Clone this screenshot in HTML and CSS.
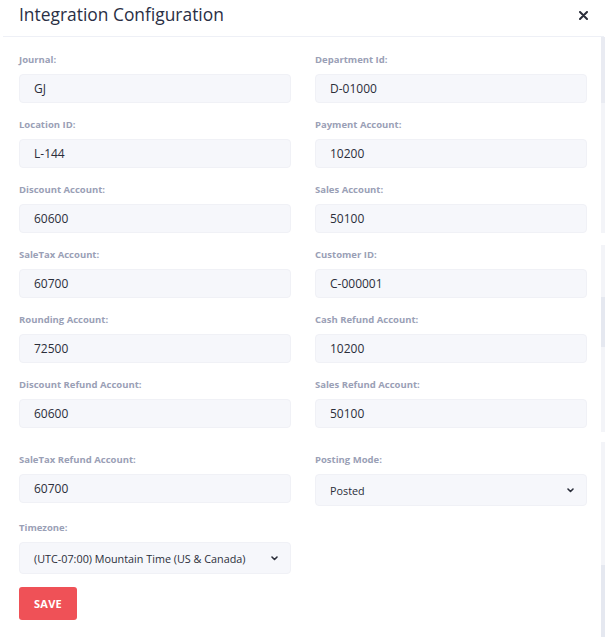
FILE: index.html
```html
<!DOCTYPE html>
<html lang="en">
<head>
<meta charset="utf-8">
<title>Integration Configuration</title>
<link rel="stylesheet" href="styles.css">
</head>
<body>
<div class="modal">
  <header class="modal-header">
    <h1 class="modal-title">Integration Configuration</h1>
    <button class="close-btn" aria-label="Close">
      <svg width="9" height="9" viewBox="0 0 9 9"><path d="M1 1L8 8M8 1L1 8" stroke="#2b2e3a" stroke-width="2" stroke-linecap="round"/></svg>
    </button>
  </header>
  <div class="modal-body">
    <form class="form">
      <div class="grid">
        <div class="field"><label>Journal:</label><div class="input">GJ</div></div>
        <div class="field"><label>Department Id:</label><div class="input">D-01000</div></div>
        <div class="field"><label>Location ID:</label><div class="input">L-144</div></div>
        <div class="field"><label>Payment Account:</label><div class="input">10200</div></div>
        <div class="field"><label>Discount Account:</label><div class="input">60600</div></div>
        <div class="field"><label>Sales Account:</label><div class="input">50100</div></div>
        <div class="field"><label>SaleTax Account:</label><div class="input">60700</div></div>
        <div class="field"><label>Customer ID:</label><div class="input">C-000001</div></div>
        <div class="field"><label>Rounding Account:</label><div class="input">72500</div></div>
        <div class="field"><label>Cash Refund Account:</label><div class="input">10200</div></div>
        <div class="field"><label>Discount Refund Account:</label><div class="input">60600</div></div>
        <div class="field"><label>Sales Refund Account:</label><div class="input">50100</div></div>
      </div>
      <div class="grid grid-second">
        <div class="field"><label>SaleTax Refund Account:</label><div class="input">60700</div></div>
        <div class="field"><label>Posting Mode:</label><div class="input select">Posted<svg class="chev" width="7" height="5" viewBox="0 0 7 5"><path d="M1 1L3.5 3.5L6 1" fill="none" stroke="#2b2e3a" stroke-width="1.6" stroke-linecap="round" stroke-linejoin="round"/></svg></div></div>
        <div class="field"><label>Timezone:</label><div class="input select">(UTC-07:00) Mountain Time (US &amp; Canada)<svg class="chev" width="7" height="5" viewBox="0 0 7 5"><path d="M1 1L3.5 3.5L6 1" fill="none" stroke="#2b2e3a" stroke-width="1.6" stroke-linecap="round" stroke-linejoin="round"/></svg></div></div>
      </div>
      <div class="actions"><button type="button" class="save-btn">SAVE</button></div>
    </form>
    <div class="scrollbar"></div>
  </div>
</div>
</body>
</html>
```

FILE: styles.css
```css
* { box-sizing: border-box; }
html, body { margin: 0; padding: 0; background: #ffffff; }
body { font-family: "Open Sans", "Noto Sans", sans-serif; color: #2b2e3a; }

.modal { width: 607px; height: 637px; display: flex; flex-direction: column; }

.modal-header {
  height: 37px;
  display: flex;
  align-items: center;
  justify-content: space-between;
  padding: 0 16px 0 16px;
  margin: 0 3px;
  border-bottom: 1px solid #eef0f6;
}
.modal-title {
  margin: 0;
  font-size: 17.4px;
  font-weight: 400;
  color: #2a2f45;
  line-height: 1;
  padding-bottom: 7px;
}
.close-btn {
  border: 0; background: none; padding: 0; cursor: pointer;
  display: flex; margin-bottom: 6px;
}

.modal-body { flex: 1; display: flex; }
.form { flex: 1; padding: 16px 0 0 19px; }

.grid {
  display: grid;
  grid-template-columns: 272px 272px;
  column-gap: 24px;
  row-gap: 15px;
}
.grid-second { margin-top: 25px; row-gap: 15px; }

.field { display: flex; flex-direction: column; }
.field label {
  font-size: 9.5px;
  font-weight: 700;
  color: #9aa0b6;
  line-height: 14px;
  margin-bottom: 7px;
}
.input {
  height: 29px;
  background: #f6f7fb;
  border: 1px solid #f0f1f6;
  border-radius: 4px;
  font-size: 12px;
  line-height: 27px;
  padding: 0 14px;
  color: #2b2e3a;
  display: flex;
  align-items: center;
  justify-content: space-between;
}
.select { height: 32px; font-size: 10.8px; }
.chev { margin-right: -2px; }

.actions { margin-top: 13px; }
.save-btn {
  width: 58px;
  height: 33px;
  background: #ef5157;
  border: 0;
  border-radius: 3px;
  color: #ffffff;
  font-family: "Open Sans", sans-serif;
  font-weight: 700;
  font-size: 11px;
  letter-spacing: 0.2px;
}

.scrollbar {
  width: 4px;
  margin-right: 2px;
  background:
    linear-gradient(to bottom,
      #e9ebf2 0, #e9ebf2 66px,
      #f3f4f8 66px, #f3f4f8 196px,
      #ffffff 196px, #ffffff 208px,
      #f3f4f8 208px, #f3f4f8 260px,
      #e5e8f0 260px, #e5e8f0 310px,
      #f3f4f8 310px, #f3f4f8 395px,
      #ffffff 395px, #ffffff 405px,
      #f3f4f8 405px, #f3f4f8 528px,
      #e5e8f0 528px, #e5e8f0 590px);
}
```
